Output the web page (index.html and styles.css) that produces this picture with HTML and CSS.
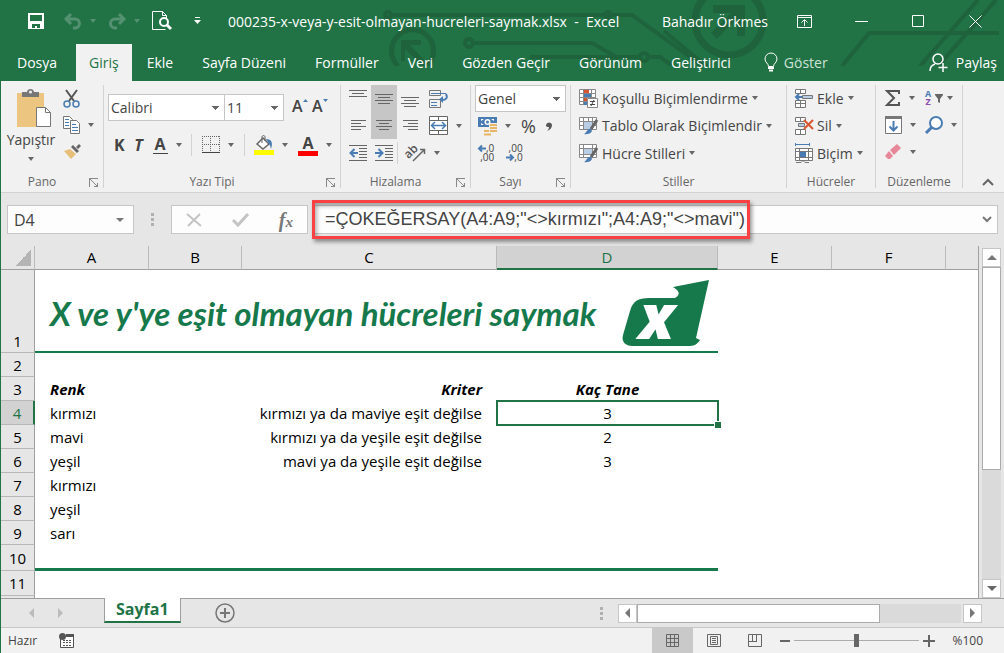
FILE: index.html
```html
<!DOCTYPE html>
<html lang="tr">
<head>
    <meta charset="UTF-8">
    <meta name="viewport" content="width=device-width, initial-scale=1.0">
    <title>000235-x-veya-y-esit-olmayan-hucreleri-saymak.xlsx - Excel</title>
    <link rel="stylesheet" href="styles.css">
</head>
<body>
    <div class="app">
        <!-- Title bar and ribbon tabs -->
        <header class="app-header">
            <svg class="circuit" width="624" height="66" viewBox="380 0 624 66" fill="none" stroke="#1e633c" stroke-width="4" aria-hidden="true">
                <path d="M398 66A21 21 0 1 1 428 65" stroke-width="5"/>
                <path d="M401 40h20v5h-11l18 19-4 4-19-19v12h-4z" fill="#1e633c" stroke="none"/>
                <circle cx="388" cy="15" r="3"/>
                <path d="M392 15h240l72 52M475 43h117l26 15M530 57h108M650 57h10l14 10"/>
                <circle cx="469" cy="43" r="4"/>
                <circle cx="608" cy="15" r="3"/>
                <circle cx="644" cy="57" r="4"/>
                <circle cx="729" cy="21" r="34" stroke-width="7"/>
                <path d="M713 5h32v31h-8v-18l-20 21-6-6 20-20h-18z" fill="#1e633c" stroke="none"/>
                <path d="M664 31l48 40M842 66l27-33h130M920 66l58-66M938 66l58-66"/>
            </svg>

            <div class="title-bar">
                <div class="quick-access">
                    <button class="bar-btn" aria-label="Kaydet">
                        <svg width="16" height="16" viewBox="0 0 16 16"><path fill="#fff" fill-rule="evenodd" d="M0 0h16v16H0zM2 2v6h12V2zM4 11v4h3v-2h2v2h3v-4z"/></svg>
                    </button>
                    <button class="bar-btn split dim" aria-label="Geri Al">
                        <svg width="18" height="16" viewBox="0 0 18 16" fill="none" stroke="currentColor" stroke-width="3"><path d="M7 1L2 6l5 5M2 6h9a4 4 0 0 1 0 9H9"/></svg>
                        <i class="caret"></i>
                    </button>
                    <button class="bar-btn split dim" aria-label="Yinele">
                        <svg width="18" height="16" viewBox="0 0 18 16" fill="none" stroke="currentColor" stroke-width="3"><path d="M11 1l5 5-5 5M16 6H7a4 4 0 0 0 0 9h2"/></svg>
                        <i class="caret"></i>
                    </button>
                    <button class="bar-btn" aria-label="Baskı Önizleme">
                        <svg width="20" height="20" viewBox="0 0 20 20" fill="none" stroke="#fff"><path d="M13.500 18.500H.500V.500h10l4 4V7M10.500.500v4h4"/><circle cx="12" cy="11" r="4" stroke-width="2" fill="#217346"/><path d="M15 14l4 4" stroke-width="3"/></svg>
                    </button>
                    <button class="bar-btn" aria-label="Araç Çubuğunu Özelleştir">
                        <svg width="7" height="8" viewBox="0 0 7 8"><path fill="#fff" d="M1 0h5v1H1zM0 3h7L3.500 7z"/></svg>
                    </button>
                </div>
                <div class="doc-title">000235-x-veya-y-esit-olmayan-hucreleri-saymak.xlsx&nbsp; -&nbsp; Excel</div>
                <div class="user-name">Bahadır Örkmes</div>
                <div class="window-controls">
                    <button aria-label="Şerit Görüntüleme Seçenekleri"><svg width="15" height="13" viewBox="0 0 15 13" fill="none" stroke="#fff"><path d="M.5.500h14v12H.500zM0 2.500h15M7.500 11V5M4.500 7.500l3-3 3 3"/></svg></button>
                    <button aria-label="Simge Durumuna Küçült"><svg width="13" height="13" viewBox="0 0 13 13" stroke="#fff"><path d="M0 6.500h13"/></svg></button>
                    <button aria-label="Ekranı Kapla"><svg width="13" height="13" viewBox="0 0 13 13" fill="none" stroke="#fff"><path d="M.5.500h11v11H.500z"/></svg></button>
                    <button aria-label="Kapat"><svg width="13" height="13" viewBox="0 0 13 13" fill="none" stroke="#fff"><path d="M.5.500l12 12M12.500.500l-12 12"/></svg></button>
                </div>
            </div>

            <nav class="ribbon-tabs">
                <a class="tab" href="#dosya">Dosya</a>
                <a class="tab active" href="#giris">Giriş</a>
                <a class="tab" href="#ekle">Ekle</a>
                <a class="tab" href="#sayfa">Sayfa Düzeni</a>
                <a class="tab" href="#formul">Formüller</a>
                <a class="tab" href="#veri">Veri</a>
                <a class="tab" href="#gozden">Gözden Geçir</a>
                <a class="tab" href="#gorunum">Görünüm</a>
                <a class="tab" href="#gelistirici">Geliştirici</a>
                <a class="tab tell-me" href="#goster">
                    <svg width="14" height="19" viewBox="0 0 14 19" fill="none" stroke="#fff"><path d="M4.500 13.500c0-3-3.500-4-3.500-7.500a6 6 0 0 1 12 0c0 3.500-3.500 4.500-3.500 7.500z"/><path d="M4 15h6M5 17.500h4" stroke-width="2"/></svg>
                    Göster
                </a>
                <a class="tab share" href="#paylas">
                    <svg width="19" height="19" viewBox="0 0 19 19" fill="none" stroke="#fff" stroke-width="1.500"><circle cx="9" cy="6" r="5"/><path d="M1 18c0-4 2-6 5-7M14 10v9M9.500 14.500h9"/></svg>
                    Paylaş
                </a>
            </nav>
        </header>

        <!-- Ribbon -->
        <section class="ribbon">
            <div class="group group-clipboard">
                <div class="group-body">
                    <button class="paste-btn">
                        <svg width="42" height="38" viewBox="-6 0 42 38"><path fill="#ecc681" d="M1 4h27v34H1z"/><path fill="#777" d="M6 3h5c0-4 7-4 7 0h5v5H6z"/><circle cx="14.500" cy="3" r="1.500" fill="#f1f1f1"/><path fill="#fff" stroke="#777" d="M20.500 18.500h9l5 5v14h-14z"/><path fill="none" stroke="#777" d="M29.500 18.500v5h5"/></svg>
                        <span>Yapıştır</span>
                        <i class="caret"></i>
                    </button>
                    <div class="tool-stack">
                        <button class="tool" aria-label="Kes"><svg width="17" height="19" viewBox="0 0 17 19" fill="none"><path d="M3 1l8 11M14 1L6 12" stroke="#555" stroke-width="2"/><circle cx="4" cy="15" r="3" stroke="#4a7cb4" stroke-width="1.500"/><circle cx="13" cy="15" r="3" stroke="#4a7cb4" stroke-width="1.500"/></svg></button>
                        <button class="tool" aria-label="Kopyala"><svg width="17" height="18" viewBox="0 0 17 18" fill="#fff" stroke="#777"><path d="M.5.500h6l3 3v9h-9z"/><path d="M2 3.500h4M2 6.500h4M2 9.500h4" stroke="#4a7cb4"/><path d="M7.500 4.500h6l3 3v10h-9z"/><path d="M9 8.500h4M9 11.500h6M9 14.500h6" stroke="#4a7cb4"/></svg><i class="caret"></i></button>
                        <button class="tool" aria-label="Biçim Boyacısı"><svg width="18" height="16" viewBox="0 0 18 16"><path fill="#e8bf78" d="M1 7l6-2 6 5-5 5z"/><path fill="#666" d="M8 3l2-2 6 6-2 2zM13 3l3-3 2 2-3 3z"/></svg></button>
                    </div>
                </div>
                <footer>Pano<i class="launcher"></i></footer>
            </div>

            <div class="group group-font">
                <div class="group-body rows">
                    <div class="tool-row">
                        <div class="font-pickers">
                            <select class="pick font-name" aria-label="Yazı Tipi"><option>Calibri</option></select>
                            <select class="pick font-size" aria-label="Yazı Tipi Boyutu"><option>11</option></select>
                        </div>
                        <button class="tool letter grow" aria-label="Yazı Tipini Büyüt">A<svg width="5" height="3" viewBox="0 0 5 3"><path fill="#4a7cb4" d="M0 3h5L2.500 0z"/></svg></button>
                        <button class="tool letter grow" aria-label="Yazı Tipini Küçült">A<svg width="5" height="3" viewBox="0 0 5 3"><path fill="#4a7cb4" d="M0 0h5L2.500 3z"/></svg></button>
                    </div>
                    <div class="tool-row font-style">
                        <button class="tool letter">K</button>
                        <button class="tool letter italic">T</button>
                        <button class="tool letter"><span class="underlined">A</span><i class="caret"></i></button>
                        <i class="rule"></i>
                        <button class="tool" aria-label="Kenarlıklar"><svg width="18" height="18" viewBox="0 0 18 18" fill="none" stroke="#666"><path stroke-dasharray="1 1" d="M0 .500h18M0 8.500h18M.5 0v16M8.500 0v16M17.500 0v16"/><path d="M0 16.500h18" stroke="#444"/></svg><i class="caret"></i></button>
                        <i class="rule"></i>
                        <button class="tool" aria-label="Dolgu Rengi"><svg width="20" height="20" viewBox="0 0 20 20"><path d="M3 9l6-6 6 6-6 5z" fill="#fff" stroke="#666" stroke-width="1.500"/><path d="M8 8V2c0-2 3-2 3 0v4" fill="none" stroke="#666"/><path d="M12 4c6 0 7 4 5 10-1-4-2-6-5-10z" fill="#4a7cb4"/><path fill="#ff0" d="M0 15h20v5H0z"/></svg><i class="caret"></i></button>
                        <button class="tool letter"><span class="font-color">A</span><i class="caret"></i></button>
                    </div>
                </div>
                <footer>Yazı Tipi<i class="launcher"></i></footer>
            </div>

            <div class="group group-align">
                <div class="group-body align-grid">
                    <button class="tool" aria-label="Üste Hizala"><svg width="18" height="18" viewBox="0 0 18 18" stroke="#666"><path d="M0 .500h18M3 3.500h12M0 6.500h18"/></svg></button>
                    <button class="tool pressed" aria-label="Ortaya Hizala"><svg width="18" height="18" viewBox="0 0 18 18" stroke="#666"><path d="M0 4.500h18M3 7.500h12M0 10.500h18M3 13.500h12"/></svg></button>
                    <button class="tool" aria-label="Alta Hizala"><svg width="18" height="18" viewBox="0 0 18 18" stroke="#666"><path d="M0 7.500h18M3 10.500h12M0 13.500h18M3 16.500h12"/></svg></button>
                    <button class="tool" aria-label="Metni Kaydır"><svg width="19" height="18" viewBox="0 0 19 18" fill="none" stroke="#777"><path d="M.5.500h11v5H.500zM.5 9.500h11v8H.500z"/><path d="M2 3.500h15M2 12.500h6M2 15.500h6" stroke="#4a7cb4"/><path d="M17 4c2 4 0 6-4 6" stroke="#4a7cb4" stroke-width="2"/><path d="M14 6v7l-4-3.500z" fill="#4a7cb4" stroke="none"/></svg></button>
                    <button class="tool" aria-label="Sola Hizala"><svg width="15" height="14" viewBox="0 0 15 14" stroke="#666"><path d="M0 1.500h15M0 4.500h10M0 7.500h15M0 10.500h10"/></svg></button>
                    <button class="tool pressed" aria-label="Ortala"><svg width="16" height="14" viewBox="0 0 16 14" stroke="#666"><path d="M0 1.500h16M3 4.500h10M0 7.500h16M3 10.500h10"/></svg></button>
                    <button class="tool" aria-label="Sağa Hizala"><svg width="15" height="14" viewBox="0 0 15 14" stroke="#666"><path d="M0 1.500h15M5 4.500h10M0 7.500h15M5 10.500h10"/></svg></button>
                    <button class="tool" aria-label="Birleştir ve Ortala"><svg width="19" height="19" viewBox="0 0 19 19" fill="#fff" stroke="#666"><path d="M.5.500h18v18H.500zM.5 4.500h18M.5 14.500h18M9.500 0v4M9.500 15v4"/><path d="M3 9.500h13M6 6L2.500 9.500 6 13M13 6l3.500 3.500L13 13" fill="none" stroke="#4a7cb4" stroke-width="1.500"/></svg><i class="caret"></i></button>
                    <button class="tool" aria-label="Girintiyi Azalt"><svg width="18" height="16" viewBox="0 0 18 16" stroke="#666"><path d="M0 .500h18M10 3.500h8M10 6.500h8M10 9.500h8M10 12.500h8M0 15.500h18"/><path d="M9 8H2M5.500 4L1.500 8l4 4" fill="none" stroke="#4a7cb4" stroke-width="2"/></svg></button>
                    <button class="tool" aria-label="Girintiyi Artır"><svg width="18" height="16" viewBox="0 0 18 16" stroke="#666"><path d="M0 .500h18M10 3.500h8M10 6.500h8M10 9.500h8M10 12.500h8M0 15.500h18"/><path d="M0 8h7M3.500 4l4 4-4 4" fill="none" stroke="#4a7cb4" stroke-width="2"/></svg></button>
                    <button class="tool wide" aria-label="Yönlendirme"><i class="rule"></i><svg width="20" height="18" viewBox="0 0 20 18"><text x="-1" y="11" transform="rotate(-45 6 9)" font-family="Open Sans" font-weight="600" font-size="12" fill="#555">ab</text><path d="M7 17L18 6M14 5.500h4.500V10" fill="none" stroke="#666" stroke-width="1.500"/></svg><i class="caret"></i></button>
                </div>
                <footer>Hizalama<i class="launcher"></i></footer>
            </div>

            <div class="group group-number">
                <div class="group-body rows">
                    <select class="pick number-format" aria-label="Sayı Biçimi"><option>Genel</option></select>
                    <div class="tool-row">
                        <button class="tool" aria-label="Finansal Sayı Biçimi"><svg width="19" height="19" viewBox="0 0 19 19"><path fill="#4a7cb4" d="M0 0h19v10H0z"/><path fill="#fff" d="M3 2h3L3 4zM16 2h-3l3 2zM3 8h3L3 6z"/><circle cx="9.500" cy="5" r="3" fill="#fff"/><circle cx="9.500" cy="5" r="1.500" fill="#4a7cb4"/><path fill="#f1f1f1" d="M5 11h6V6h8v13H5z"/><path stroke="#e8b566" stroke-width="2" d="M12 8h7M12 11h7M12 14h7M6 14h5M6 17.500h7"/></svg><i class="caret"></i></button>
                        <button class="tool sign">%</button>
                        <button class="tool" aria-label="Virgül Stili"><svg width="6" height="9" viewBox="0 0 6 9"><path fill="#555" d="M1 5a3 2.500 0 1 1 5-2c0 3-2 5-5 6 1-1 2-2 2-4z"/></svg></button>
                    </div>
                    <div class="tool-row">
                        <button class="tool decimals" aria-label="Ondalık Artır"><span><svg width="8" height="7" viewBox="0 0 8 7"><path d="M8 3.500H1M4 .500L1 3.500l3 3" fill="none" stroke="#4a7cb4" stroke-width="2"/></svg>,0</span><span>,00</span></button>
                        <button class="tool decimals" aria-label="Ondalık Azalt"><span>,00</span><span><svg width="8" height="7" viewBox="0 0 8 7"><path d="M0 3.500h7M4 .500l3 3-3 3" fill="none" stroke="#4a7cb4" stroke-width="2"/></svg>,0</span></button>
                    </div>
                </div>
                <footer>Sayı<i class="launcher"></i></footer>
            </div>

            <div class="group group-styles">
                <div class="group-body rows">
                    <button class="tool labelled"><svg width="19" height="19" viewBox="0 0 19 19" fill="#fff" stroke="#888"><path d="M.5.500h16v15H.500zM4.500 0v16M12.500 0v16M0 4.500h16M0 8.500h16M0 12.500h16"/><path fill="#d9552f" stroke="none" d="M5 1h5v3H5zM5 9h3v3H5z"/><path fill="#4a7cb4" stroke="none" d="M5 5h7v3H5zM5 13h3v3H5z"/><path d="M8.500 9.500h10v9h-10z"/><path d="M11 12.500h5M11 15.500h5M15 11l-3 6" stroke="#444"/></svg>Koşullu Biçimlendirme<i class="caret"></i></button>
                    <button class="tool labelled"><svg width="19" height="18" viewBox="0 0 19 18" fill="#fff" stroke="#888"><path d="M.5.500h17v12H.500zM0 4.500h17M0 8.500h17M4.500 0v13M9.500 0v13M13.500 0v13"/><path fill="#b9cde4" stroke="none" d="M5 5h8v7H5z"/><path d="M18 3l-6 9" stroke="#666" stroke-width="3"/><path fill="#4a7cb4" stroke="none" d="M5 17c3-1 3-6 7-5 3 3-2 6-7 5z"/></svg>Tablo Olarak Biçimlendir<i class="caret"></i></button>
                    <button class="tool labelled"><svg width="19" height="19" viewBox="0 0 19 19" fill="#fff" stroke="#888"><path d="M.5.500h17v13H.500zM0 4.500h17M0 10.500h17M4.500 0v13M13.500 0v13"/><path fill="#b9cde4" stroke="none" d="M5 5h8v5H5z"/><path d="M18 4l-6 9" stroke="#666" stroke-width="3"/><path fill="#4a7cb4" stroke="none" d="M5 18c3-1 3-6 7-5 3 3-2 6-7 5z"/></svg>Hücre Stilleri<i class="caret"></i></button>
                </div>
                <footer>Stiller</footer>
            </div>

            <div class="group group-cells">
                <div class="group-body rows">
                    <button class="tool labelled"><svg width="18" height="19" viewBox="0 0 18 19" fill="#fff" stroke="#777"><path d="M.5.500h10v4H.500zM5.500 0v5M.5 11.500h10v7H.500zM.5 14.500h10M5.500 11v7"/><path d="M7.500 6.500h10v3h-10z" fill="#b9cde4"/><path d="M7 8H1M4 5L1 8l3 3" fill="none" stroke="#4a7cb4" stroke-width="2"/></svg>Ekle<i class="caret"></i></button>
                    <button class="tool labelled"><svg width="18" height="18" viewBox="0 0 18 18" fill="#fff" stroke="#777"><path d="M.5.500h10v4H.500zM5.500 0v5M.5 12.500h10v5H.500zM5.500 12v5"/><path d="M3.500 6.500h6v3h-6z" fill="#b9cde4"/><path d="M9 3l9 9M18 3l-9 9" stroke="#d9552f" stroke-width="2"/></svg>Sil<i class="caret"></i></button>
                    <button class="tool labelled"><svg width="18" height="20" viewBox="0 0 18 20" fill="#fff" stroke="#777"><path d="M1 1.500h13M.5 0v3M14.500 0v3" stroke="#4a7cb4"/><path d="M.5 5.500h17v12H.500zM0 8.500h17M0 14.500h17M4.500 5v12M13.500 5v12M1 19.500h5l2-2 2 2h4"/><path fill="#4a7cb4" stroke="none" d="M5 9h6v5H5z"/></svg>Biçim<i class="caret"></i></button>
                </div>
                <footer>Hücreler</footer>
            </div>

            <div class="group group-edit">
                <div class="group-body edit-grid">
                    <button class="tool" aria-label="Otomatik Toplam"><svg width="16" height="16" viewBox="0 0 16 16"><path fill="none" stroke="#555" stroke-width="2" d="M14 4V1H2l7 7-7 7h12v-3"/></svg><i class="caret"></i></button>
                    <button class="tool az" aria-label="Sırala ve Filtre Uygula"><span class="letters"><b>A</b><b>Z</b></span><svg width="8" height="9" viewBox="0 0 8 9"><path fill="#666" d="M0 0h8v1L5 5v4L3 8V5L0 1z"/></svg><i class="caret"></i></button>
                    <button class="tool" aria-label="Dolgu"><svg width="17" height="18" viewBox="0 0 17 18"><path fill="#fff" stroke="#777" d="M.5.500h16v17H.500z"/><path fill="#777" d="M0 0h17v3H0z"/><path d="M8.500 5v9M4.500 10.500l4 4 4-4" fill="none" stroke="#4a7cb4" stroke-width="2"/></svg><i class="caret"></i></button>
                    <button class="tool" aria-label="Bul ve Seç"><svg width="18" height="18" viewBox="0 0 18 18" fill="none" stroke="#4a7cb4" stroke-width="2"><circle cx="11" cy="7" r="6" fill="#fff"/><path d="M7 11l-6 6" stroke-width="3"/></svg><i class="caret"></i></button>
                    <button class="tool" aria-label="Temizle"><svg width="17" height="16" viewBox="0 0 17 16"><path fill="#e7879a" d="M5 6l7-6 4 4-7 7z"/><path fill="#e7879a" d="M4 7l4 5-3 3H3l-3-3z"/></svg><i class="caret"></i></button>
                </div>
                <footer>Düzenleme</footer>
            </div>

            <button class="collapse" aria-label="Şeridi Daralt"><svg width="12" height="8" viewBox="0 0 12 8"><path d="M1 7l5-5 5 5" fill="none" stroke="#666" stroke-width="2"/></svg></button>
        </section>

        <!-- Formula bar -->
        <section class="formula-bar">
            <div class="name-box">
                <input type="text" value="D4" aria-label="Ad Kutusu">
                <button aria-label="Ad listesi"><i class="caret"></i></button>
            </div>
            <i class="grip"></i>
            <div class="formula-actions">
                <button aria-label="İptal"><svg width="16" height="14" viewBox="0 0 16 14"><path d="M1 1l14 12M14 1L2 13" fill="none" stroke="#c4c4c4" stroke-width="2"/></svg></button>
                <button aria-label="Gir"><svg width="17" height="14" viewBox="0 0 17 14"><path d="M1 7l5 5L16 1" fill="none" stroke="#c4c4c4" stroke-width="3"/></svg></button>
                <button class="fx" aria-label="İşlev Ekle"><i>f</i><i class="sub">x</i></button>
            </div>
            <div class="formula-field">
                <input type="text" value='=ÇOKEĞERSAY(A4:A9;"&lt;&gt;kırmızı";A4:A9;"&lt;&gt;mavi")' aria-label="Formül Çubuğu">
                <button aria-label="Formül Çubuğunu Genişlet"><svg width="10" height="7" viewBox="0 0 10 7"><path d="M1 1l4 4 4-4" fill="none" stroke="#777" stroke-width="2"/></svg></button>
                <div class="callout"></div>
            </div>
        </section>

        <!-- Worksheet -->
        <main class="workspace">
            <div class="sheet">
                <table>
                    <colgroup>
                        <col class="col-head"><col class="col-a"><col class="col-b"><col class="col-c"><col class="col-d"><col class="col-a"><col class="col-a"><col>
                    </colgroup>
                    <thead>
                        <tr><th class="corner"></th><th>A</th><th>B</th><th>C</th><th class="selected">D</th><th>E</th><th>F</th><th></th></tr>
                    </thead>
                    <tbody>
                        <tr class="row-title">
                            <th>1</th>
                            <td colspan="4">
                                <div class="banner">
                                    <h1>X ve y'ye eşit olmayan hücreleri saymak</h1>
                                    <svg width="87" height="67" viewBox="0 0 87 67" role="img" aria-label="Logo"><path fill="#16794c" d="M87 0L51 7c5 3 9 7 2 11H27C16 18 11 21 8 31L1 55c-2 7 3 11 9 11h58c5 0 8-3 10-6l-4-2z"/><text x="17" y="59" font-family="Open Sans" font-weight="800" font-style="italic" font-size="62" fill="#fff">x</text></svg>
                                </div>
                            </td>
                            <td colspan="3"></td>
                        </tr>
                        <tr><th>2</th><td></td><td></td><td></td><td></td><td colspan="3"></td></tr>
                        <tr class="labels"><th>3</th><td>Renk</td><td></td><td class="criteria">Kriter</td><td class="count">Kaç Tane</td><td colspan="3"></td></tr>
                        <tr><th class="selected">4</th><td>kırmızı</td><td colspan="2" class="criteria">kırmızı ya da maviye eşit değilse</td><td class="count active-cell">3</td><td colspan="3"></td></tr>
                        <tr><th>5</th><td>mavi</td><td colspan="2" class="criteria">kırmızı ya da yeşile eşit değilse</td><td class="count">2</td><td colspan="3"></td></tr>
                        <tr><th>6</th><td>yeşil</td><td colspan="2" class="criteria">mavi ya da yeşile eşit değilse</td><td class="count">3</td><td colspan="3"></td></tr>
                        <tr><th>7</th><td>kırmızı</td><td colspan="6"></td></tr>
                        <tr><th>8</th><td>yeşil</td><td colspan="6"></td></tr>
                        <tr><th>9</th><td>sarı</td><td colspan="6"></td></tr>
                        <tr class="row-end"><th>10</th><td colspan="4"></td><td colspan="3"></td></tr>
                        <tr class="row-tall"><th>11</th><td colspan="7"></td></tr>
                        <tr><th></th><td colspan="7"></td></tr>
                    </tbody>
                </table>
            </div>
            <div class="scroll-y">
                <button aria-label="Yukarı"><i class="caret up"></i></button>
                <div class="track"><div class="thumb"></div></div>
                <button aria-label="Aşağı"><i class="caret big"></i></button>
            </div>
        </main>

        <!-- Sheet tabs -->
        <section class="sheet-tabs">
            <div class="sheet-nav">
                <button aria-label="Önceki sayfa"><i class="arrow left"></i></button>
                <button aria-label="Sonraki sayfa"><i class="arrow right"></i></button>
            </div>
            <a class="sheet-tab" href="#sayfa1">Sayfa1</a>
            <button class="add-sheet" aria-label="Yeni sayfa"><svg width="20" height="20" viewBox="0 0 20 20" fill="none" stroke="#777"><circle cx="10" cy="10" r="9" stroke-width="1.500"/><path d="M10 5v10M5 10h10" stroke-width="2"/></svg></button>
            <i class="grip"></i>
            <div class="scroll-x">
                <button aria-label="Sola"><i class="arrow left"></i></button>
                <div class="track"><div class="thumb"></div></div>
                <button aria-label="Sağa"><i class="arrow right"></i></button>
            </div>
        </section>

        <!-- Status bar -->
        <footer class="status-bar">
            <span>Hazır</span>
            <button class="macro" aria-label="Makro Kaydet"><svg width="15" height="15" viewBox="0 0 15 15"><path fill="#fff" stroke="#555" d="M1.500 3.500h13v11h-13z"/><path fill="#555" d="M7 1h8v3H7z"/><circle cx="3.500" cy="3.500" r="3.500" fill="#555"/><path stroke="#555" stroke-dasharray="2 1" d="M4 7.500h9M4 9.500h9M4 12.500h9"/></svg></button>
            <div class="views">
                <button class="current" aria-label="Normal"><svg width="13" height="13" viewBox="0 0 13 13" fill="none" stroke="#666"><path d="M.5.500h12v12H.500zM4.500 0v13M8.500 0v13M0 4.500h13M0 8.500h13"/></svg></button>
                <button aria-label="Sayfa Düzeni"><svg width="14" height="13" viewBox="0 0 14 13" fill="none" stroke="#666"><path d="M.5.500h13v12H.500zM3.500 2.500h7v8h-7zM5 4.500h4M5 6.500h4M5 8.500h4"/></svg></button>
                <button aria-label="Sayfa Sonu Önizleme"><svg width="14" height="13" viewBox="0 0 14 13" fill="none" stroke="#666"><path d="M.5.500h13v12H.500zM4.500 0v7M8.500 0v7M0 7.500h9"/></svg></button>
            </div>
            <div class="zoom">
                <button aria-label="Uzaklaştır"><svg width="10" height="12" viewBox="0 0 10 12"><path d="M0 6h10" stroke="#666" stroke-width="2"/></svg></button>
                <input type="range" min="0" max="100" value="50" aria-label="Yakınlaştırma">
                <button aria-label="Yakınlaştır"><svg width="12" height="12" viewBox="0 0 12 12"><path d="M0 6h12M6 0v12" stroke="#666" stroke-width="2"/></svg></button>
            </div>
            <span class="zoom-value">%100</span>
        </footer>
    </div>
</body>
</html>
```
FILE: styles.css
```css
:root {
    --green: #217346;
    --sheet-green: #16794c;
    --ribbon: #f1f1f1;
    --chrome: #e6e6e6;
    --line: #c6c6c6;
    --head-line: #9f9f9f;
    --text: #444;
    --blue: #4a7cb4;
}

* {
    margin: 0;
    padding: 0;
    box-sizing: border-box;
}

body {
    font-family: 'Open Sans', 'Noto Sans', sans-serif;
    font-size: 14px;
    color: var(--text);
    overflow: hidden;
}

button {
    display: flex;
    align-items: center;
    justify-content: center;
    border: none;
    background: none;
    font: inherit;
    color: inherit;
}

input,
select {
    border: none;
    outline: none;
    font: inherit;
    color: inherit;
}

a {
    color: inherit;
    text-decoration: none;
}

svg {
    display: block;
    flex: none;
    overflow: visible;
}

.app {
    height: 100vh;
    display: flex;
    flex-direction: column;
    border-left: 1px solid var(--green);
    background: var(--chrome);
}

.caret {
    flex: none;
    border: 3px solid transparent;
    border-top: 4px solid #666;
    border-bottom: none;
}

.caret.big {
    border-width: 5px 5px 0;
}

.caret.up {
    border: 5px solid transparent;
    border-bottom-color: #777;
    border-top: none;
}

.arrow {
    border: 5px solid transparent;
}

.arrow.left {
    border-right-color: #777;
    border-left: none;
}

.arrow.right {
    border-left-color: #777;
    border-right: none;
}

.grip {
    width: 3px;
    height: 13px;
    background: repeating-linear-gradient(#b0b0b0 0 3px, transparent 3px 5px);
}

/* Header */
.app-header {
    position: relative;
    flex: none;
    background: var(--green);
    color: #fff;
}

.circuit {
    position: absolute;
    top: 0;
    right: 0;
    overflow: hidden;
}

.title-bar {
    position: relative;
    display: flex;
    align-items: center;
    height: 42px;
    white-space: nowrap;
}

.quick-access {
    display: flex;
    align-items: center;
    width: 227px;
    padding-left: 27px;
    gap: 12px;
}

.bar-btn {
    height: 24px;
}

.bar-btn.split {
    gap: 8px;
}

.bar-btn:first-child {
    margin-right: 8px;
}

.bar-btn:last-child {
    margin-left: 10px;
}

.dim {
    color: #549171;
}

.dim .caret {
    border-top-color: #549171;
}

.doc-title {
    flex: 1;
}

.user-name {
    padding-right: 8px;
}

.window-controls {
    display: flex;
}

.window-controls button {
    width: 57px;
    height: 40px;
}

.ribbon-tabs {
    position: relative;
    display: flex;
    gap: 1px;
    height: 37px;
    margin-top: 2px;
    white-space: nowrap;
}

.tab {
    display: flex;
    align-items: center;
    padding: 0 14px;
}

.tab:first-child {
    padding: 0 18px 0 16px;
}

.tab.active {
    padding: 0 13px;
    background: var(--ribbon);
    color: var(--green);
}

.tell-me {
    gap: 6px;
    padding-left: 18px;
    color: #cfe2d7;
}

.share {
    gap: 8px;
    margin-left: auto;
    padding-right: 7px;
}

/* Ribbon */
.ribbon {
    flex: none;
    display: flex;
    height: 112px;
    padding: 4px 0;
    background: var(--ribbon);
    border-bottom: 1px solid #d2d2d2;
    white-space: nowrap;
}

.group {
    display: flex;
    flex-direction: column;
    justify-content: space-between;
    border-right: 1px solid #d2d2d2;
}

.group footer {
    position: relative;
    height: 12px;
    text-align: center;
    font-size: 12px;
    line-height: 12px;
    color: #666;
}

.group-clipboard { width: 103px; }
.group-font { width: 237px; }
.group-align { width: 130px; }
.group-number { width: 100px; }
.group-styles { width: 216px; }
.group-cells { width: 89px; }
.group-edit { width: 87px; }

/* keeps the name clear of the launcher */
.group-clipboard footer,
.group-font footer,
.group-align footer,
.group-number footer {
    padding-right: 20px;
}

.launcher {
    position: absolute;
    right: 5px;
    bottom: 1px;
    width: 9px;
    height: 9px;
    border-top: 1px solid #888;
    border-left: 1px solid #888;
    background: linear-gradient(to top right, transparent 45%, #888 45% 55%, transparent 55%) no-repeat, linear-gradient(#888, #888) 100% 100% / 4px 1px no-repeat, linear-gradient(#888, #888) 100% 100% / 1px 4px no-repeat;
}

.group-body {
    display: flex;
    height: 81px;
}

.group-body.rows {
    flex-direction: column;
    justify-content: space-between;
}

.tool {
    height: 26px;
    gap: 8px;
}

.tool-row {
    display: flex;
    align-items: center;
}

.paste-btn {
    flex-direction: column;
    justify-content: flex-start;
    width: 60px;
    padding-top: 4px;
}

.paste-btn span {
    margin: 2px 0 6px;
    line-height: 22px;
}

.tool-stack {
    display: flex;
    flex-direction: column;
    gap: 1px;
    padding-left: 2px;
}

.tool-stack .tool {
    justify-content: flex-start;
}

.group-font .group-body {
    height: 73px;
    padding: 9px 8px 0 4px;
}

.font-pickers {
    display: flex;
    margin-right: 8px;
}

.pick {
    appearance: none;
    height: 27px;
    padding-left: 2px;
    border: 1px solid var(--line);
    border-radius: 0;
    background: conic-gradient(from -45deg at 50% 100%, #666 90deg, transparent 0) right 5px center / 7px 4px no-repeat, #fff;
}

/* arrow pointing down: the wedge opens upwards from the bottom centre */
.font-name { width: 117px; }
.font-size { width: 60px; margin-left: -1px; }

.number-format {
    width: 91px;
}

.letter {
    font-weight: 700;
    font-size: 16px;
}

.letter.grow {
    width: 25px;
    gap: 0;
    align-items: flex-start;
    justify-content: flex-start;
    font-weight: 600;
}

.letter.grow svg {
    margin-top: 4px;
}

.font-style {
    justify-content: space-between;
    padding-left: 6px;
}

.italic {
    font-style: italic;
}

.underlined {
    line-height: 17px;
    padding: 0 2px;
    border-bottom: 1px solid var(--text);
}

.font-color {
    width: 20px;
    line-height: 16px;
    border-bottom: 5px solid #f00;
}

.rule {
    width: 1px;
    height: 22px;
    background: #d2d2d2;
}

.align-grid {
    display: grid;
    grid-template-columns: repeat(3, 26px) 1fr;
    grid-auto-rows: 27px;
    padding-left: 4px;
}

.align-grid .tool {
    height: 27px;
}

.align-grid .tool:nth-child(4n) {
    justify-content: flex-start;
    padding-left: 6px;
}

.wide {
    grid-column: 3 / 5;
    justify-content: flex-start;
}

.pressed {
    background: #c6c6c6;
}

.group-number .group-body {
    padding-left: 4px;
}

.group-number .tool-row {
    gap: 10px;
    padding-left: 3px;
}

.sign {
    font-size: 18px;
}

.decimals {
    flex-direction: column;
    align-items: flex-end;
    gap: 0;
    padding-right: 2px;
    font-size: 10px;
    line-height: 9px;
}

.decimals span {
    display: flex;
    align-items: center;
}

.group-styles .group-body,
.group-cells .group-body {
    align-items: flex-start;
    padding-left: 8px;
}

.labelled {
    gap: 4px;
}

.edit-grid {
    display: grid;
    grid-template-columns: 40px 1fr;
    grid-auto-rows: 27px;
    justify-items: start;
    padding-left: 9px;
}

.az {
    gap: 4px;
}

.letters {
    display: flex;
    flex-direction: column;
    font-size: 9px;
    line-height: 8px;
    color: var(--blue);
}

.letters b:last-child {
    color: #8a4db0;
}

.collapse {
    margin: auto 0 0 auto;
    width: 32px;
    height: 12px;
}

/* Formula bar */
.formula-bar {
    flex: none;
    display: flex;
    align-items: center;
    height: 53px;
    padding: 0 6px;
}

.name-box,
.formula-actions,
.formula-field {
    display: flex;
    align-items: center;
    height: 29px;
    border: 1px solid var(--line);
    background: #fdfdfd;
}

.name-box {
    width: 127px;
}

.name-box input {
    width: 100px;
    padding-left: 6px;
    background: none;
    font-size: 16px;
}

.name-box button {
    width: 24px;
}

.name-box .caret {
    border-width: 4px 4px 0;
    border-top-color: #777;
}

.formula-bar .grip {
    margin: 0 17px;
}

.formula-actions {
    width: 137px;
    padding: 0 12px 0 14px;
    margin-right: 4px;
    justify-content: space-between;
}

.formula-actions button {
    height: 24px;
}

.fx {
    align-items: baseline;
    padding-right: 2px;
    font-family: 'Liberation Serif', serif;
    font-size: 20px;
    font-weight: 700;
    line-height: 24px;
    color: #777;
}

.fx .sub {
    font-size: 15px;
}

.formula-field {
    position: relative;
    flex: 1;
}

.formula-field input {
    flex: 1;
    padding-left: 12px;
    background: none;
    font-family: 'Liberation Sans', Arial, sans-serif;
    font-size: 18px;
}

.formula-field button {
    width: 20px;
    height: 26px;
}

.callout {
    position: absolute;
    top: -6px;
    left: -1px;
    width: 438px;
    height: 39px;
    border: 3px solid #f94144;
    box-shadow: 2px 3px 4px rgba(0, 0, 0, 0.4), inset 2px 3px 4px rgba(0, 0, 0, 0.3);
    pointer-events: none;
}

/* Worksheet */
.workspace {
    flex: 1;
    display: flex;
    min-height: 0;
}

.sheet {
    flex: 1;
    overflow: hidden;
    background: #fff;
    border-right: 1px solid var(--head-line);
}

table {
    width: 100%;
    table-layout: fixed;
    border-collapse: separate;
    border-spacing: 0;
    font-size: 15px;
    color: #000;
}

.col-head { width: 34px; }
.col-a { width: 114px; }
.col-b { width: 93px; }
.col-c { width: 255px; }
.col-d { width: 221px; }

tr {
    height: 24px;
}

th {
    background: var(--chrome);
    border-right: 1px solid var(--head-line);
    border-bottom: 1px solid #b8b8b8;
    font-weight: 400;
    vertical-align: bottom;
    line-height: 22px;
}

thead th {
    border-right-color: #bbb;
    border-bottom-color: var(--head-line);
    line-height: 23px;
}

thead th:last-child {
    border-right: none;
}

.corner {
    background: linear-gradient(135deg, transparent 50%, #b4b4b4 50%) 14px 4px / 16px 16px no-repeat var(--chrome);
}

th.selected {
    background: #d2d2d2;
    color: var(--green);
}

thead th.selected {
    border-bottom: 2px solid var(--green);
    line-height: 22px;
}

tbody th.selected {
    border-right: 2px solid var(--green);
}

td {
    padding: 0 15px;
    line-height: 23px;
    white-space: nowrap;
}

.row-title {
    height: 83px;
}

.row-title td {
    padding: 5px 9px 0 15px;
}

.row-title td:nth-child(2) {
    border-bottom: 2px solid var(--sheet-green);
}

.banner {
    display: flex;
    align-items: center;
    justify-content: space-between;
}

h1 {
    font-family: Lato, 'Open Sans', sans-serif;
    font-size: 33px;
    font-style: italic;
    font-weight: 700;
    line-height: 60px;
    color: var(--sheet-green);
}

.labels td {
    font-style: italic;
    font-weight: 700;
}

.criteria {
    text-align: right;
}

.count {
    text-align: center;
}

.active-cell {
    position: relative;
    outline: 2px solid var(--green);
    outline-offset: -1px;
}

.active-cell::after {
    content: '';
    position: absolute;
    right: -3px;
    bottom: -3px;
    width: 6px;
    height: 6px;
    background: var(--green);
    border: solid #fff;
    border-width: 1px 0 0 1px;
}

.row-end {
    height: 26px;
}

.row-end td:nth-child(2) {
    border-bottom: 3px solid var(--sheet-green);
}

.row-end th,
.row-tall th {
    line-height: 24px;
}

.row-tall {
    height: 25px;
}

/* Scrollbars */
.scroll-y {
    display: flex;
    flex-direction: column;
    width: 25px;
    padding: 2px 3px 0;
}

.scroll-y button,
.scroll-x button {
    flex: none;
    width: 19px;
    height: 19px;
    border: 1px solid var(--line);
    background: #fff;
}

.track {
    flex: 1;
    background: #dadada;
}

.thumb {
    background: #fff;
    border: 1px solid #ababab;
}

.scroll-y .thumb {
    height: 65%;
}

.scroll-x .thumb {
    width: 75%;
    height: 100%;
}

/* Sheet tabs */
.sheet-tabs {
    flex: none;
    display: flex;
    align-items: center;
    height: 30px;
    border-top: 1px solid var(--head-line);
    border-bottom: 1px solid var(--line);
}

.sheet-nav {
    display: flex;
    width: 103px;
    padding-left: 28px;
    gap: 24px;
}

.sheet-nav .arrow.left {
    border-right-color: #bbb;
}

.sheet-nav .arrow.right {
    border-left-color: #bbb;
}

.sheet-tab {
    align-self: flex-start;
    margin-top: -1px;
    padding: 0 11px;
    line-height: 23px;
    background: #fff;
    border: solid var(--head-line);
    border-width: 0 1px;
    border-bottom: 2px solid var(--green);
    color: var(--green);
    font-size: 16px;
    font-weight: 700;
}

.add-sheet {
    margin: 0 auto 0 34px;
}

.scroll-x {
    display: flex;
    width: 364px;
    margin: 0 22px 0 15px;
}

.scroll-x .track {
    margin-right: 2px;
}

/* Status bar */
.status-bar {
    flex: none;
    display: flex;
    align-items: center;
    height: 25px;
    padding: 0 21px 0 7px;
    background: var(--ribbon);
    font-size: 12px;
}

.macro {
    margin: 0 auto 0 22px;
}

.views {
    display: flex;
    align-self: stretch;
}

.views button {
    width: 41px;
}

.views .current {
    background: #c9c9c9;
}

.zoom {
    display: flex;
    align-items: center;
    gap: 4px;
    margin: 0 17px 0 5px;
}

input[type='range'] {
    appearance: none;
    width: 125px;
    height: 14px;
    background: linear-gradient(#ababab, #ababab) center / 100% 1px no-repeat;
}

input[type='range']::-webkit-slider-thumb {
    appearance: none;
    width: 5px;
    height: 13px;
    background: #666;
}
```
